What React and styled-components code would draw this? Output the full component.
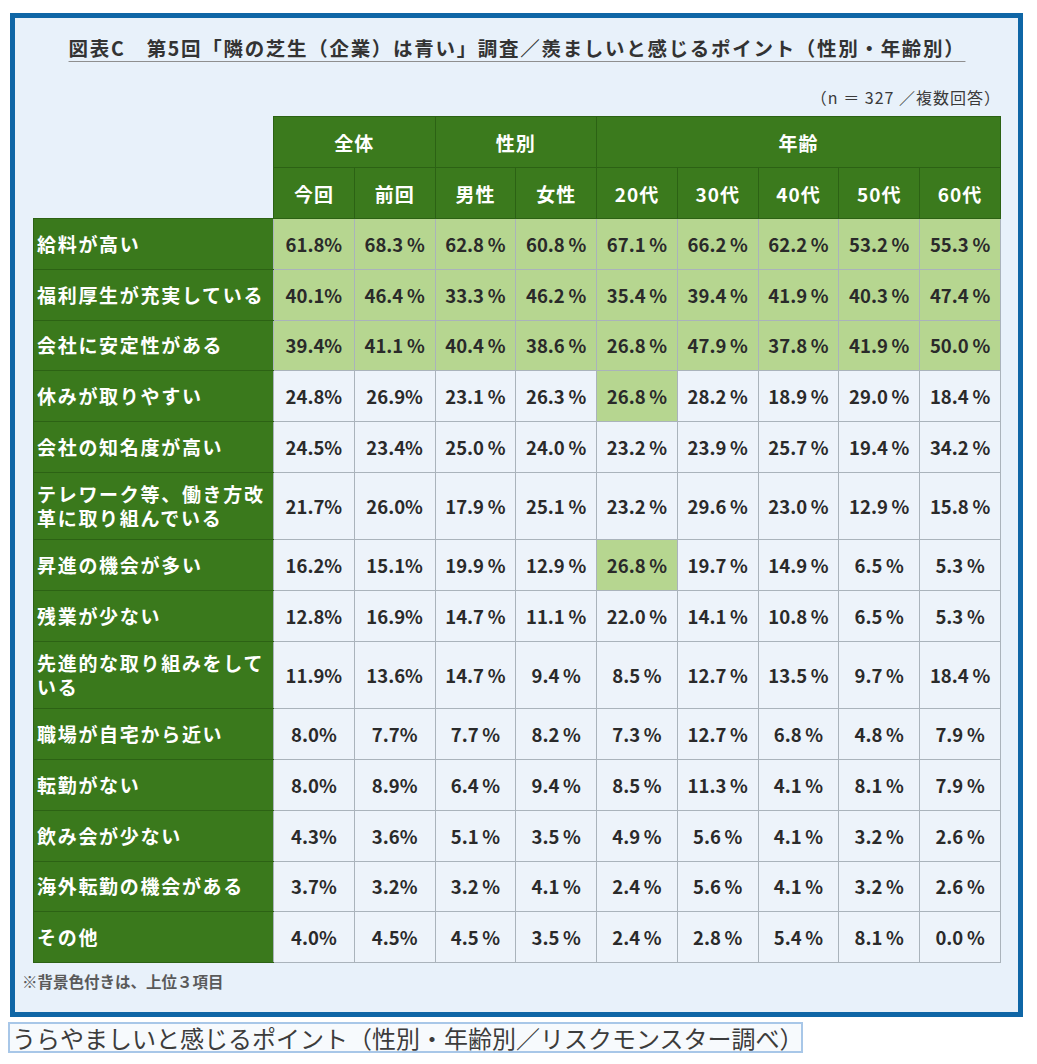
import React from 'react';
import styled, { createGlobalStyle } from 'styled-components';

const GlobalStyle = createGlobalStyle`
  html, body {
    margin: 0;
    padding: 0;
    background: #ffffff;
  }
  body {
    font-family: 'Noto Sans CJK JP', 'Noto Sans', sans-serif;
  }
`;

const Page = styled.div`
  width: 1037px;
  height: 1064px;
  padding: 13px 0 0 8px;
  box-sizing: border-box;
  display: flex;
  flex-direction: column;
  align-items: flex-start;
`;

const Frame = styled.div`
  margin-left: 2px;
  width: 1013px;
  height: 1004px;
  box-sizing: border-box;
  border: 5px solid #0f66a6;
  background: #e8f1fa;
  padding: 16px 17px 0 18px;
  display: flex;
  flex-direction: column;
`;

const Title = styled.h1`
  margin: 0;
  align-self: center;
  font-size: 19.5px;
  font-weight: 700;
  letter-spacing: 1.7px;
  color: #333;
  line-height: 28px;
  text-decoration: underline;
  text-decoration-color: #8f8f8f;
  text-decoration-thickness: 1px;
  text-underline-offset: 5px;
`;

const Sample = styled.div`
  margin-top: 25px;
  align-self: flex-end;
  font-size: 16px;
  color: #3a3a3a;
  line-height: 20px;
  letter-spacing: 1px;
`;

const Table = styled.table`
  margin-top: 9px;
  width: 968px;
  border-collapse: collapse;
  table-layout: fixed;
`;

const HeadCell = styled.th`
  background: #3b7a1d;
  color: #ffffff;
  font-size: 19px;
  font-weight: 700;
  height: 50px;
  padding: 0;
  text-align: center;
  border: 1px solid #2c6214;
  letter-spacing: 1px;
`;

const Blank = styled.th`
  background: transparent;
  border: none;
`;

const Label = styled.th`
  background: #3a791c;
  color: #ffffff;
  font-size: 19px;
  font-weight: 700;
  text-align: left;
  padding: 0 3px;
  line-height: 24px;
  letter-spacing: 1.7px;
  height: ${(p) => (p.$tall ? '66.5px' : '49.75px')};
  border: 1px solid #2c6214;
  border-right-color: #a9b3bb;
`;

const Cell = styled.td`
  background: ${(p) => (p.$hl ? '#b6d690' : '#edf3fa')};
  color: #2a2a2a;
  font-size: 18.5px;
  font-weight: 700;
  text-align: center;
  padding: 0;
  border: 1px solid #aab3bb;
`;

const Note = styled.div`
  margin-top: 8px;
  margin-left: -11px;
  font-size: 15.5px;
  font-weight: 700;
  color: #5a5a5a;
  line-height: 20px;
`;

const Caption = styled.div`
  margin-top: 5px;
  width: 795px;
  box-sizing: border-box;
  border: 2px solid #a8c7e8;
  background: #f7fafd;
  color: #3c3c3c;
  font-size: 24px;
  line-height: 27px;
  padding: 0 0 0 2px;
  white-space: nowrap;
`;

const columns = ['今回', '前回', '男性', '女性', '20代', '30代', '40代', '50代', '60代'];

const rows = [
  { label: '給料が高い', values: [61.8, 68.3, 62.8, 60.8, 67.1, 66.2, 62.2, 53.2, 55.3], hl: 'all' },
  { label: '福利厚生が充実している', values: [40.1, 46.4, 33.3, 46.2, 35.4, 39.4, 41.9, 40.3, 47.4], hl: 'all' },
  { label: '会社に安定性がある', values: [39.4, 41.1, 40.4, 38.6, 26.8, 47.9, 37.8, 41.9, 50.0], hl: 'all' },
  { label: '休みが取りやすい', values: [24.8, 26.9, 23.1, 26.3, 26.8, 28.2, 18.9, 29.0, 18.4], hl: [4] },
  { label: '会社の知名度が高い', values: [24.5, 23.4, 25.0, 24.0, 23.2, 23.9, 25.7, 19.4, 34.2] },
  { label: 'テレワーク等、働き方改革に取り組んでいる', values: [21.7, 26.0, 17.9, 25.1, 23.2, 29.6, 23.0, 12.9, 15.8], tall: true },
  { label: '昇進の機会が多い', values: [16.2, 15.1, 19.9, 12.9, 26.8, 19.7, 14.9, 6.5, 5.3], hl: [4] },
  { label: '残業が少ない', values: [12.8, 16.9, 14.7, 11.1, 22.0, 14.1, 10.8, 6.5, 5.3] },
  { label: '先進的な取り組みをしている', values: [11.9, 13.6, 14.7, 9.4, 8.5, 12.7, 13.5, 9.7, 18.4], tall: true },
  { label: '職場が自宅から近い', values: [8.0, 7.7, 7.7, 8.2, 7.3, 12.7, 6.8, 4.8, 7.9] },
  { label: '転勤がない', values: [8.0, 8.9, 6.4, 9.4, 8.5, 11.3, 4.1, 8.1, 7.9] },
  { label: '飲み会が少ない', values: [4.3, 3.6, 5.1, 3.5, 4.9, 5.6, 4.1, 3.2, 2.6] },
  { label: '海外転勤の機会がある', values: [3.7, 3.2, 3.2, 4.1, 2.4, 5.6, 4.1, 3.2, 2.6] },
  { label: 'その他', values: [4.0, 4.5, 4.5, 3.5, 2.4, 2.8, 5.4, 8.1, 0.0] },
];

// 今回 is always tight, 前回 only spaced in the top three rows
const formatValue = (v, col, rowIndex) => {
  const tight = col === 0 || (col === 1 && rowIndex > 2);
  return v.toFixed(1) + (tight ? '%' : '\u2009%');
};

const isHighlighted = (row, col) =>
  row.hl === 'all' || (Array.isArray(row.hl) && row.hl.includes(col));

const App = () => (
  <>
    <GlobalStyle />
    <Page>
      <Frame>
        <Title>図表C　第5回「隣の芝生（企業）は青い」調査／羨ましいと感じるポイント（性別・年齢別）</Title>
        <Sample>（n ＝ 327 ／複数回答）</Sample>
        <Table>
          <colgroup>
            <col style={{ width: 240 }} />
            {columns.map((c) => (
              <col key={c} />
            ))}
          </colgroup>
          <thead>
            <tr>
              <Blank />
              <HeadCell colSpan={2}>全体</HeadCell>
              <HeadCell colSpan={2}>性別</HeadCell>
              <HeadCell colSpan={5}>年齢</HeadCell>
            </tr>
            <tr>
              <Blank />
              {columns.map((c) => (
                <HeadCell key={c}>{c}</HeadCell>
              ))}
            </tr>
          </thead>
          <tbody>
            {rows.map((row, i) => (
              <tr key={row.label}>
                <Label $tall={row.tall}>{row.label}</Label>
                {row.values.map((v, j) => (
                  <Cell key={j} $hl={isHighlighted(row, j)}>
                    {formatValue(v, j, i)}
                  </Cell>
                ))}
              </tr>
            ))}
          </tbody>
        </Table>
        <Note>※背景色付きは、上位３項目</Note>
      </Frame>
      <Caption>うらやましいと感じるポイント（性別・年齢別／リスクモンスター調べ）</Caption>
    </Page>
  </>
);

export default App;
